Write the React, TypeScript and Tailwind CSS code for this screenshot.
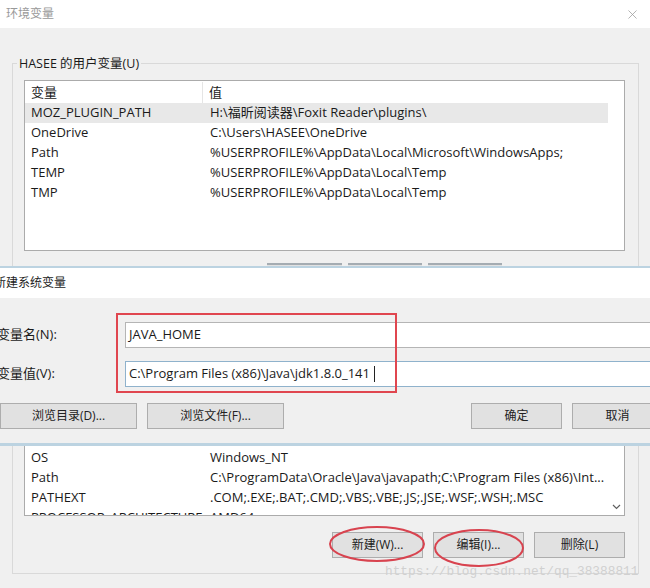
import React from 'react';
import { X } from 'lucide-react';

const userVars = [
  ['MOZ_PLUGIN_PATH', 'H:\\福昕阅读器\\Foxit Reader\\plugins\\'],
  ['OneDrive', 'C:\\Users\\HASEE\\OneDrive'],
  ['Path', '%USERPROFILE%\\AppData\\Local\\Microsoft\\WindowsApps;'],
  ['TEMP', '%USERPROFILE%\\AppData\\Local\\Temp'],
  ['TMP', '%USERPROFILE%\\AppData\\Local\\Temp'],
];

const sysVars = [
  ['OS', 'Windows_NT'],
  ['Path', 'C:\\ProgramData\\Oracle\\Java\\javapath;C:\\Program Files (x86)\\Int...'],
  ['PATHEXT', '.COM;.EXE;.BAT;.CMD;.VBS;.VBE;.JS;.JSE;.WSF;.WSH;.MSC'],
  ['PROCESSOR_ARCHITECTURE', 'AMD64'],
];

const Row = ({ name, value, selected }: { name: string; value: string; selected?: boolean }) => (
  <div className={`flex h-[20px] items-center w-[583px] whitespace-nowrap ${selected ? 'bg-[#e8e8e8]' : ''}`}>
    <span className="w-[185px] shrink-0 pl-[6px]">{name}</span>
    <span>{value}</span>
  </div>
);

const Btn = ({ label, className = '' }: { label: string; className?: string }) => (
  <div
    className={`h-[26px] shrink-0 border border-[#adadad] bg-[#e1e1e1] flex items-center justify-center text-[12px] text-[#222] ${className}`}
  >
    {label}
  </div>
);

export default function App() {
  return (
    <div className="w-[650px] h-[588px] overflow-hidden bg-[#f0f0f0] flex flex-col text-[#1a1a1a] text-[13px] font-['Open_Sans','Noto_Sans_CJK_SC',sans-serif]">
      {/* background window, upper part */}
      <div className="h-[266px] shrink-0 flex flex-col overflow-hidden">
        <div className="h-[28px] shrink-0 bg-white flex items-center justify-between pl-[6px] pr-[10px]">
          <span className="text-[12px] text-[#999]">环境变量</span>
          <X size={15} strokeWidth={1.2} className="text-[#9a9a9a]" />
        </div>
        <div className="flex-1 pt-[35px] pl-[12px]">
          <div className="relative w-[627px] h-[250px] border-t border-l border-r border-[#d9d9d9] pt-[16px] pl-[11px]">
            <span className="absolute -top-[10px] left-[4px] bg-[#f0f0f0] px-[2px] text-[12.5px] leading-[20px]">
              HASEE 的用户变量(U)
            </span>
            <div className="w-[601px] h-[171px] bg-white border border-[#ababab] pt-[1px]">
              <div className="flex h-[21px] items-center">
                <span className="w-[178px] pl-[6px] border-r border-[#e5e5e5] h-full flex items-center">变量</span>
                <span className="pl-[6px]">值</span>
              </div>
              {userVars.map(([n, v], i) => (
                <Row key={n} name={n} value={v} selected={i === 0} />
              ))}
            </div>
            <div className="flex gap-[6px] ml-[243px] mt-[12px]">
              <div className="w-[75px] h-[3px] border-t-2 border-[#a5acb2] bg-[#e1e1e1]" />
              <div className="w-[74px] h-[3px] border-t-2 border-[#a5acb2] bg-[#e1e1e1]" />
              <div className="w-[74px] h-[3px] border-t-2 border-[#a5acb2] bg-[#e1e1e1]" />
            </div>
          </div>
        </div>
      </div>

      {/* new system variable dialog */}
      <div className="h-[180px] shrink-0 relative flex flex-col border-t-2 border-b-[3px] border-[#bcd3e1]">
        <div className="h-[30px] shrink-0 bg-white flex items-center">
          <span className="-ml-[6px] text-[12px] text-[#222]">新建系统变量</span>
        </div>
        <div className="flex-1 bg-[#f0f0f0] pt-[24px] flex flex-col">
          <div className="flex items-center h-[26px]">
            <span className="-ml-[3px] w-[128px] shrink-0">变量名(N):</span>
            <div className="w-[540px] h-[26px] shrink-0 bg-white border border-[#b5b5b5] flex items-center pl-[3px]">
              JAVA_HOME
            </div>
          </div>
          <div className="flex items-center h-[26px] mt-[13px]">
            <span className="-ml-[3px] w-[128px] shrink-0">变量值(V):</span>
            <div className="w-[540px] h-[26px] shrink-0 bg-white border border-[#8fb2cc] flex items-center pl-[3px] whitespace-nowrap">
              C:\Program Files (x86)\Java\jdk1.8.0_141
              <span className="ml-[4px] w-[1px] h-[16px] bg-[#222]" />
            </div>
          </div>
          <div className="flex mt-[16px]">
            <Btn label="浏览目录(D)..." className="w-[137px]" />
            <Btn label="浏览文件(F)..." className="w-[137px] ml-[10px]" />
            <Btn label="确定" className="w-[91px] ml-[187px]" />
            <Btn label="取消" className="w-[91px] ml-[10px]" />
          </div>
        </div>
        <div className="absolute top-[45px] left-[116px] w-[281px] h-[80px] border-2 border-[#e0464f]" />
      </div>

      {/* background window, lower part */}
      <div className="flex-1 relative">
        <div className="ml-[12px] w-[627px] h-[128px] border-l border-r border-b border-[#d9d9d9] pl-[11px]">
          <div className="w-[601px] h-[70px] bg-white border-l border-r border-b border-[#ababab] overflow-hidden flex">
            <div className="w-[583px] pt-[2px]">
              {sysVars.map(([n, v]) => (
                <Row key={n} name={n} value={v} />
              ))}
            </div>
            <div className="flex-1 flex flex-col justify-end items-center pb-[5px]">
              <svg width="9" height="6" viewBox="0 0 9 6">
                <path d="M1 1 L4.5 4.5 L8 1" fill="none" stroke="#606060" strokeWidth="1.2" />
              </svg>
            </div>
          </div>
          <div className="flex gap-[10px] ml-[308px] mt-[16px]">
            <Btn label="新建(W)..." className="w-[91px]" />
            <Btn label="编辑(I)..." className="w-[91px]" />
            <Btn label="删除(L)" className="w-[91px]" />
          </div>
        </div>
        <span className="absolute left-[385px] top-[117px] text-[12.8px] leading-[18px] text-[#d0d0d0] font-['Liberation_Mono',monospace]">
          https://blog.csdn.net/qq_38388811
        </span>
        <svg className="absolute top-0 left-0 pointer-events-none" width="650" height="142">
          <ellipse cx="377" cy="98" rx="47" ry="17" fill="none" stroke="#d8434f" strokeWidth="2" />
          <ellipse cx="479" cy="102" rx="44" ry="18" fill="none" stroke="#d8434f" strokeWidth="2" />
        </svg>
      </div>
    </div>
  );
}
